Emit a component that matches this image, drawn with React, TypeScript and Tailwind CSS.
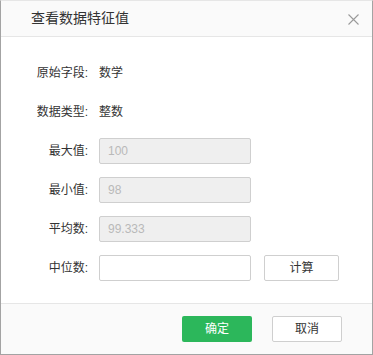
import React from "react";

const font = { fontFamily: '"Liberation Sans", "Noto Sans CJK SC", sans-serif' };

function Row({ label, children }: { label: string; children: React.ReactNode }) {
  return (
    <div className="flex h-[26px] items-center">
      <div className="w-[87px] text-right text-[12px] text-[#333]">{label}</div>
      <div className="ml-[11px] flex items-center">{children}</div>
    </div>
  );
}

function DisabledInput({ value }: { value: string }) {
  return (
    <div className="flex h-[26px] w-[152px] items-center rounded-[2px] border border-[#cfcfcf] bg-[#efefef] px-[8px] text-[12px] text-[#b9b9b9]">
      {value}
    </div>
  );
}

export default function App() {
  return (
    <div
      style={font}
      className="flex h-[355px] w-[373px] flex-col border border-[#a3a3a3] border-t-[#e6e6e6] bg-white"
    >
      <div className="flex h-[36px] shrink-0 items-center justify-between border-b border-[#e6e6e6] bg-[#fafafa] pl-[30px] pr-[13px]">
        <span className="text-[14px] text-[#333]">查看数据特征值</span>
        <svg width="11" height="11" viewBox="0 0 11 11" className="mt-[1px]">
          <path d="M0.5 0.5 L10.5 10.5 M10.5 0.5 L0.5 10.5" stroke="#9a9a9a" strokeWidth="1.1" />
        </svg>
      </div>
      <div className="flex h-[266px] shrink-0 flex-col gap-[13px] pt-[23px]">
        <Row label="原始字段:">
          <span className="text-[12px] text-[#333]">数学</span>
        </Row>
        <Row label="数据类型:">
          <span className="text-[12px] text-[#333]">整数</span>
        </Row>
        <Row label="最大值:">
          <DisabledInput value="100" />
        </Row>
        <Row label="最小值:">
          <DisabledInput value="98" />
        </Row>
        <Row label="平均数:">
          <DisabledInput value="99.333" />
        </Row>
        <Row label="中位数:">
          <div className="h-[26px] w-[152px] rounded-[2px] border border-[#cfcfcf] bg-white" />
          <button className="ml-[13px] flex h-[26px] w-[75px] items-center justify-center rounded-[2px] border border-[#cfcfcf] bg-white text-[12px] text-[#333]">
            计算
          </button>
        </Row>
      </div>
      <div className="flex flex-1 items-center justify-end gap-[20px] border-t border-[#e6e6e6] bg-[#fafafa] pr-[30px]">
        <button className="flex h-[26px] w-[70px] items-center justify-center rounded-[2px] bg-[#2cb75b] text-[12px] text-white">
          确定
        </button>
        <button className="flex h-[26px] w-[70px] items-center justify-center rounded-[2px] border border-[#cfcfcf] bg-white text-[12px] text-[#333]">
          取消
        </button>
      </div>
    </div>
  );
}
